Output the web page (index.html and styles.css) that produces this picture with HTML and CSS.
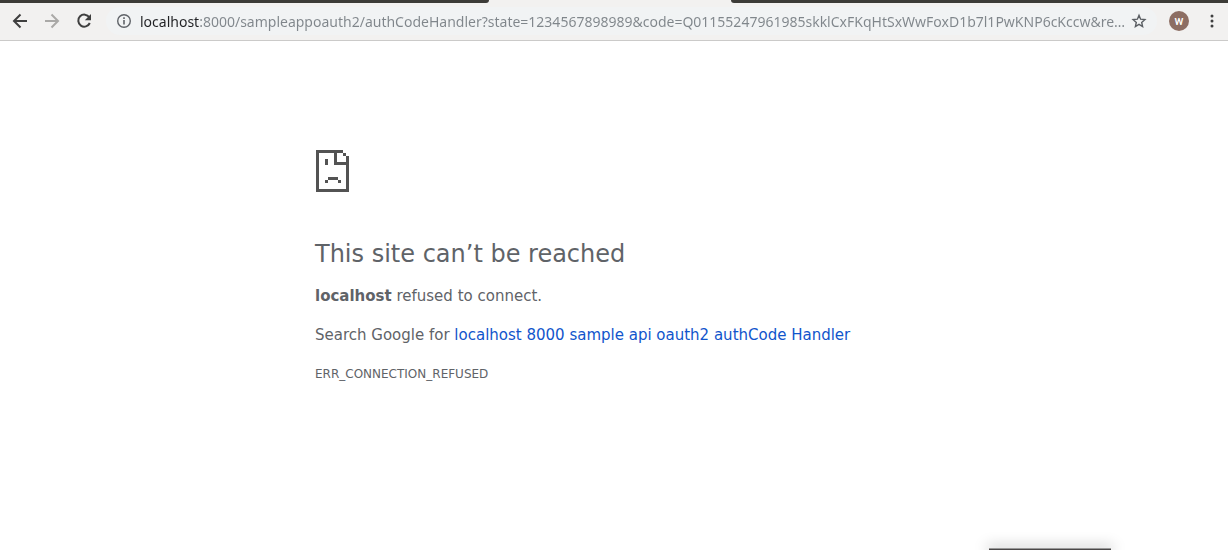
FILE: index.html
```html
<!DOCTYPE html>
<html lang="en">
<head>
<meta charset="utf-8">
<meta name="viewport" content="width=device-width, initial-scale=1">
<title>localhost</title>
<link rel="stylesheet" href="styles.css">
</head>
<body>
<div class="tabstrip">
  <div class="strip strip-left"></div>
  <div class="active-tab"></div>
  <div class="strip strip-right"></div>
</div>
<header class="toolbar">
  <button class="nav" type="button" aria-label="Back">
    <svg width="16" height="16" viewBox="0 0 16 16" fill="none" stroke="#3f3f3f" stroke-width="2"><path d="M15 8H2.500M8.500 1.500 2 8l6.500 6.500"/></svg>
  </button>
  <button class="nav" type="button" aria-label="Forward">
    <svg width="16" height="16" viewBox="0 0 16 16" fill="none" stroke="#aaa9a7" stroke-width="2"><path d="M1 8h12.500M7.500 1.500 14 8l-6.500 6.500"/></svg>
  </button>
  <button class="nav" type="button" aria-label="Reload">
    <svg width="16" height="16" viewBox="0 0 16 16"><path d="M13.300 4.300A6 6 0 1 0 13.800 10" fill="none" stroke="#3f3f3f" stroke-width="2"/><path d="M15 1v6.200H8.800z" fill="#3f3f3f"/></svg>
  </button>
  <div class="omnibox">
    <button class="icon" type="button" aria-label="Site information">
      <svg width="16" height="16" viewBox="0 0 16 16"><circle cx="8" cy="8" r="6.300" fill="none" stroke="#5f6368" stroke-width="1.400"/><path d="M7.200 7h1.600v4.600H7.200zM7.200 4.300h1.600v1.600H7.200z" fill="#5f6368"/></svg>
    </button>
    <input class="url" type="text" aria-label="Address" spellcheck="false" value="localhost:8000/sampleappoauth2/authCodeHandler?state=1234567898989&amp;code=Q01155247961985skklCxFKqHtSxWwFoxD1b7l1PwKNP6cKccw&amp;re…">
    <button class="icon" type="button" aria-label="Bookmark this page">
      <svg width="16" height="16" viewBox="0 0 16 16" fill="none" stroke="#5a5e63" stroke-width="1.400"><path d="m8 2.300 1.600 3.900 4.300.4-3.200 2.800.9 4.200L8 11.400l-3.600 2.200.9-4.200-3.200-2.800 4.300-.4z"/></svg>
    </button>
  </div>
  <button class="avatar" type="button" aria-label="Profile">w</button>
  <button class="menu" type="button" aria-label="Menu">
    <svg width="4" height="14" viewBox="0 0 4 14" fill="#3f3f3f"><circle cx="2" cy="2" r="1.500"/><circle cx="2" cy="7" r="1.500"/><circle cx="2" cy="12" r="1.500"/></svg>
  </button>
</header>
<main class="error">
  <svg class="sad-page" width="33" height="42" viewBox="0 0 33 42" fill="#535353" shape-rendering="crispEdges" role="img" aria-label="Page unavailable"><path d="M0 0h27v3h3v3h3v36H0zM3 3v36h27V15H18V3zM21 3v9h9V6h-3V3z" fill-rule="evenodd"/><path d="M27 3h3v3h-3zM9 9h3v6H9zM12 27h10v3H12zM9 30h3v3H9zM22 30h3v3h-3z"/></svg>
  <h1 class="title">This site can’t be reached</h1>
  <p class="text"><strong>localhost</strong> refused to connect.</p>
  <p class="text">Search Google for <a class="link" href="#search">localhost 8000 sample api oauth2 authCode Handler</a></p>
  <p class="code">ERR_CONNECTION_REFUSED</p>
</main>
<div class="popup-edge"></div>
</body>
</html>
```
FILE: styles.css
```css
* {
  box-sizing: border-box;
}

body {
  position: relative;
  min-height: 100vh;
  margin: 0;
  overflow: hidden;
  background: #fff;
  color: #5f6368;
  font-family: "DejaVu Sans", sans-serif;
}

button {
  display: flex;
  align-items: center;
  justify-content: center;
  flex: none;
  padding: 0;
  border: 0;
  background: none;
}

.tabstrip {
  display: flex;
  height: 3px;
  background: #f2f1f0;
}

.strip {
  background: #3c3b37;
}

.strip-left {
  flex: 489;
  border-bottom-right-radius: 4px;
}

.active-tab {
  flex: 242;
}

.strip-right {
  flex: 497;
  border-bottom-left-radius: 4px;
}

.toolbar {
  display: flex;
  align-items: center;
  height: 38px;
  padding: 0 8px 1px 4px;
  border-bottom: 1px solid #cbcac9;
  background: #f2f1f0;
}

.nav {
  width: 32px;
  height: 32px;
}

.omnibox {
  display: flex;
  align-items: center;
  flex: 1;
  height: 28px;
  margin-left: 6px;
  padding: 0 10px;
  border-radius: 14px;
  background: #f1f3f4;
}

.icon {
  width: 16px;
  height: 28px;
}

.url {
  flex: 1;
  min-width: 0;
  height: 28px;
  margin-left: 8px;
  padding: 0;
  border: 0;
  outline: 0;
  background: linear-gradient(90deg, #202124 59px, #80868b 59px);
  background-clip: text;
  -webkit-background-clip: text;
  color: transparent;
  font: 14px "Noto Sans", sans-serif;
  text-overflow: ellipsis;
}

.avatar {
  width: 20px;
  height: 20px;
  margin-left: 12px;
  border-radius: 50%;
  background: #8d6e63;
  color: #fff;
  font: 500 12px Roboto, sans-serif;
}

.menu {
  width: 16px;
  height: 28px;
  margin-left: 15px;
}

.error {
  max-width: 600px;
  margin: 109px auto 0;
}

.sad-page {
  display: block;
  margin-left: 2px;
}

.title {
  margin: 46px 0 14px;
  padding-left: 1px;
  font-size: 24px;
  font-weight: 400;
  line-height: 32px;
}

.text {
  margin: 0 0 15px;
  padding-left: 1px;
  font-size: 15px;
  line-height: 24px;
}

.link {
  color: #1155cc;
  text-decoration: none;
}

.code {
  margin: 0;
  padding-left: 1px;
  font-size: 12px;
  line-height: 24px;
}

.popup-edge {
  position: absolute;
  right: 117px;
  bottom: 0;
  width: 122px;
  height: 2px;
  border-top: 1px solid #999;
  background: #4b4848;
  box-shadow: 0 0 14px 2px rgba(0, 0, 0, 0.25);
}
```
